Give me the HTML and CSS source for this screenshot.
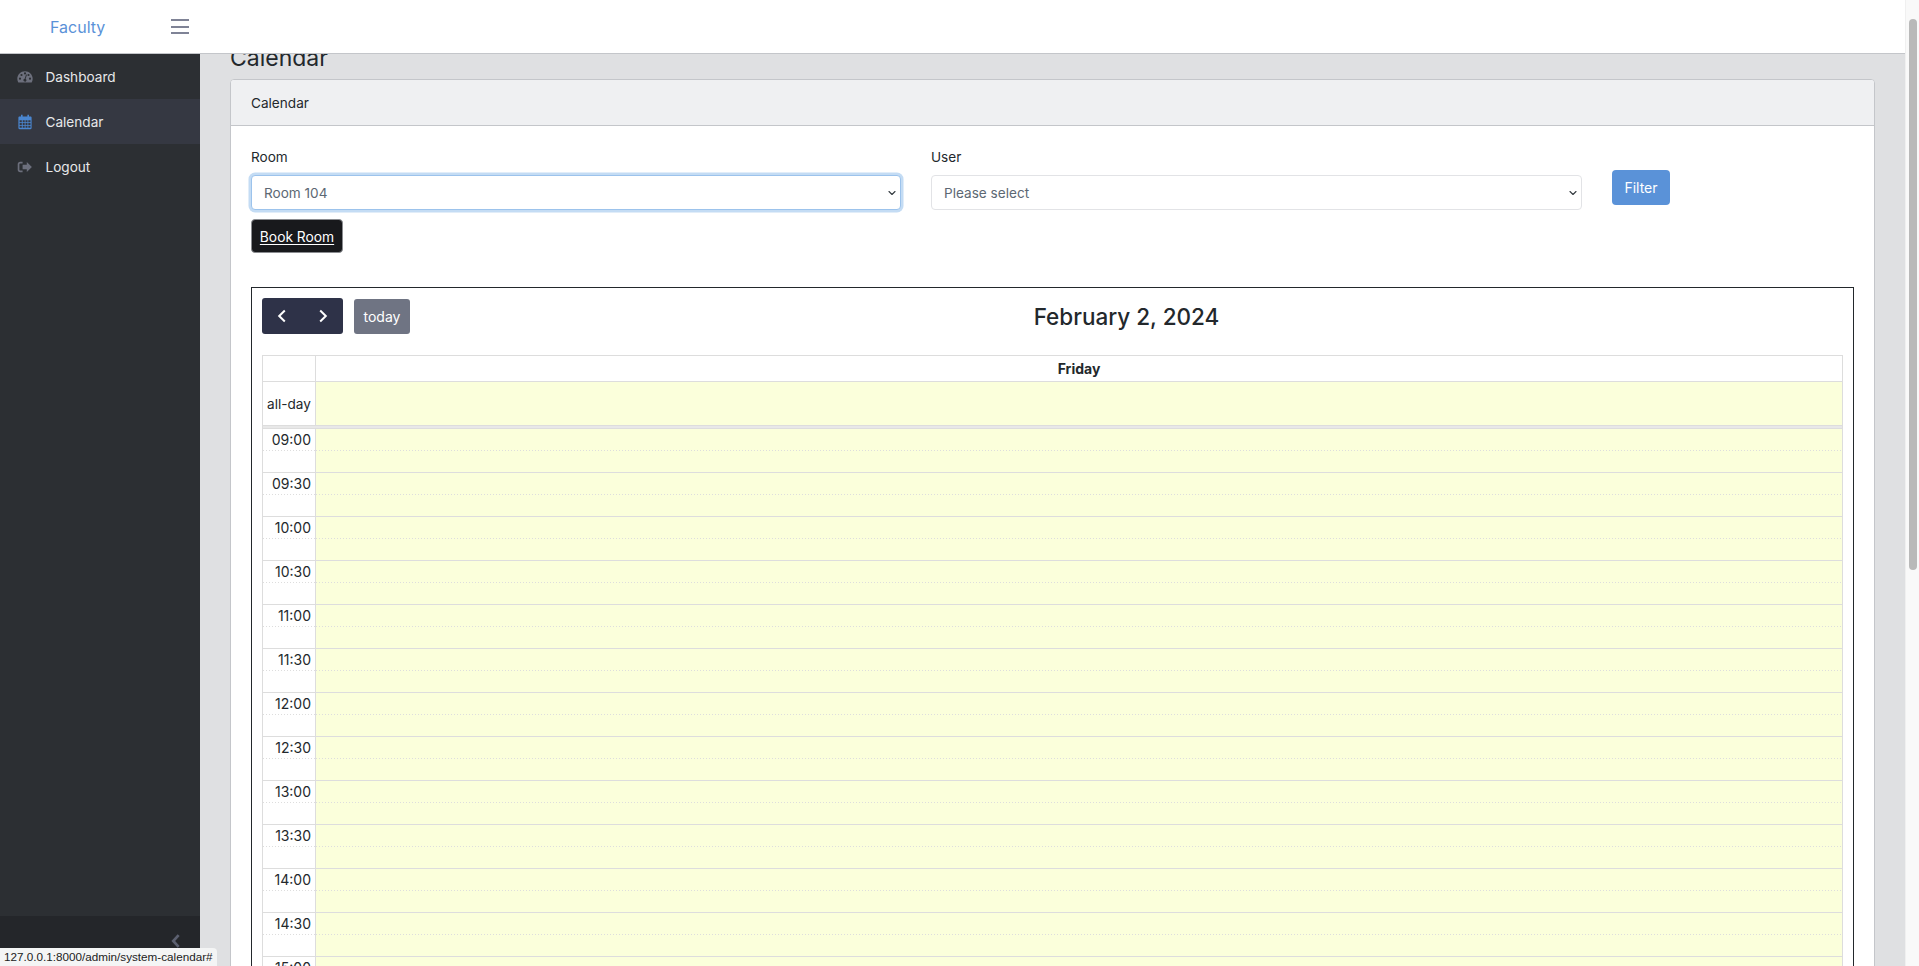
FILE: index.html
```html
<!DOCTYPE html>
<html lang="en">
<head>
<meta charset="utf-8">
<title>Calendar</title>
<link rel="stylesheet" href="styles.css">
</head>
<body>
<div class="app">
  <div class="page">
    <header class="topbar">
      <a class="brand" href="#">Faculty</a>
      <button class="burger" aria-label="Toggle menu"><span></span><span></span><span></span></button>
    </header>
    <div class="body">
      <nav class="sidebar">
        <a class="nav-item" href="#">
          <svg class="nav-icon" viewBox="0 0 16 16"><path fill="currentColor" fill-rule="evenodd" d="M8 2.200C3.700 2.200.3 5.600.3 9.800c0 1.300.3 2.400.9 3.400.1.200.3.300.5.300h12.600c.2 0 .4-.1.5-.3.6-1 .9-2.100.9-3.400 0-4.200-3.400-7.600-7.700-7.600zM3 10.800a1.100 1.100 0 1 1 0-2.200 1.100 1.100 0 0 1 0 2.200zm1.500-3.700a1.100 1.100 0 1 1 0-2.200 1.100 1.100 0 0 1 0 2.200zM8 5.500a1.100 1.100 0 1 1 0-2.200 1.100 1.100 0 0 1 0 2.200zm1.400 6.300a1.600 1.600 0 0 1-3-.9c.2-.6.7-1 1.300-1.100l1.200-3.900c.1-.3.4-.4.6-.3.3.1.4.3.3.6L8.600 9.900c.7.4 1 1.200.8 1.900zM11.500 7.100a1.100 1.100 0 1 1 0-2.200 1.100 1.100 0 0 1 0 2.200zm1.500 3.700a1.100 1.100 0 1 1 0-2.200 1.100 1.100 0 0 1 0 2.200z"/></svg>
          <span>Dashboard</span>
        </a>
        <a class="nav-item active" href="#">
          <svg class="nav-icon" viewBox="0 0 16 16"><path fill="currentColor" fill-rule="evenodd" d="M4 .8h1.600v1.600h4.800V.8H12v1.600h1.500c.6 0 1.100.5 1.100 1.100v10.600c0 .6-.5 1.100-1.100 1.100h-11c-.6 0-1.100-.5-1.100-1.100V3.500c0-.6.5-1.100 1.100-1.100H4V.8zM2.600 6.200v2h2.200v-2H2.600zm3.100 0v2h2v-2h-2zm2.800 0v2h2v-2h-2zm2.800 0v2h2.200v-2h-2.200zM2.600 9v2h2.200V9H2.600zm3.100 0v2h2V9h-2zm2.800 0v2h2V9h-2zm2.800 0v2h2.200V9h-2.200zM2.600 11.800v2h2.200v-2H2.600zm3.100 0v2h2v-2h-2zm2.800 0v2h2v-2h-2zm2.800 0v2h2.200v-2h-2.200z"/></svg>
          <span>Calendar</span>
        </a>
        <a class="nav-item" href="#">
          <svg class="nav-icon" viewBox="0 0 16 16"><path fill="currentColor" d="M5.600 2.800H3.200c-1.500 0-2.500 1-2.500 2.400v5.600c0 1.400 1 2.400 2.500 2.400h2.400v-1.700H3.400c-.6 0-1-.4-1-1V5.500c0-.6.4-1 1-1h2.200zM9.800 2.900 14.900 8l-5.100 5.100V10.200H5.600V5.800h4.200z"/></svg>
          <span>Logout</span>
        </a>
        <div class="sidebar-footer">
          <svg class="collapse-icon" viewBox="0 0 10 16"><path fill="none" stroke="currentColor" stroke-width="3" d="M8.500 1.500 2.500 8l6 6.500"/></svg>
        </div>
      </nav>
      <main class="main">
        <h3 class="page-title">Calendar</h3>
        <section class="card">
          <div class="card-header">Calendar</div>
          <div class="card-body">
            <form class="filters">
              <div class="field">
                <label class="field-label" for="room">Room</label>
                <select class="select is-focused" id="room"><option>Room 104</option></select>
              </div>
              <div class="field">
                <label class="field-label" for="user">User</label>
                <select class="select" id="user"><option>Please select</option></select>
              </div>
              <button class="btn btn-filter" type="button">Filter</button>
            </form>
            <a class="btn-book" href="#">Book Room</a>
            <div class="calendar">
              <div class="toolbar">
                <div class="toolbar-left">
                  <div class="nav-group">
                    <button class="cal-nav" aria-label="Previous"><svg viewBox="0 0 16 16"><path d="M10.800 2.500 5.200 8l5.600 5.500"/></svg></button>
                    <button class="cal-nav" aria-label="Next"><svg viewBox="0 0 16 16"><path d="M5.200 2.500 10.800 8l-5.600 5.500"/></svg></button>
                  </div>
                  <button class="btn-today">today</button>
                </div>
                <h2 class="cal-title">February 2, 2024</h2>
                <div></div>
              </div>
              <div class="grid">
                <div class="grid-row head">
                  <div class="axis"></div>
                  <div class="day-head">Friday</div>
                </div>
                <div class="grid-row allday">
                  <div class="axis axis-mid">all-day</div>
                  <div class="day"></div>
                </div>
                <div class="divider"></div>
                <div class="grid-row slot first"><div class="axis"><span class="time">09:00</span></div><div class="day"></div></div>
                <div class="grid-row slot"><div class="axis"><span class="time">09:30</span></div><div class="day"></div></div>
                <div class="grid-row slot"><div class="axis"><span class="time">10:00</span></div><div class="day"></div></div>
                <div class="grid-row slot"><div class="axis"><span class="time">10:30</span></div><div class="day"></div></div>
                <div class="grid-row slot"><div class="axis"><span class="time">11:00</span></div><div class="day"></div></div>
                <div class="grid-row slot"><div class="axis"><span class="time">11:30</span></div><div class="day"></div></div>
                <div class="grid-row slot"><div class="axis"><span class="time">12:00</span></div><div class="day"></div></div>
                <div class="grid-row slot"><div class="axis"><span class="time">12:30</span></div><div class="day"></div></div>
                <div class="grid-row slot"><div class="axis"><span class="time">13:00</span></div><div class="day"></div></div>
                <div class="grid-row slot"><div class="axis"><span class="time">13:30</span></div><div class="day"></div></div>
                <div class="grid-row slot"><div class="axis"><span class="time">14:00</span></div><div class="day"></div></div>
                <div class="grid-row slot"><div class="axis"><span class="time">14:30</span></div><div class="day"></div></div>
                <div class="grid-row slot"><div class="axis"><span class="time">15:00</span></div><div class="day"></div></div>
              </div>
            </div>
          </div>
        </section>
      </main>
    </div>
  </div>
  <div class="scrollbar"><div class="thumb"></div></div>
  <div class="status">127.0.0.1:8000/admin/system-calendar#</div>
</div>
</body>
</html>
```
FILE: styles.css
```css
* { box-sizing: border-box; }
html, body { margin: 0; height: 966px; overflow: hidden; }
body { font-family: Inter, "Liberation Sans", sans-serif; font-size: 13.6px; color: #23282c; background: #fff; }

.app { display: flex; height: 966px; position: relative; overflow: hidden; }
.page { flex: 1; min-width: 0; display: flex; flex-direction: column; }

.scrollbar { width: 14px; background: #f9f9f9; border-left: 1px solid #f0f0f0; padding: 19px 2px 0 3px; }
.thumb { height: 551px; background: #b9b9b9; border-radius: 4px; }

.topbar { height: 54px; flex: none; display: flex; align-items: center; background: #fff; border-bottom: 1px solid #c4c6ca; }
.brand { width: 155px; padding-left: 50px; font-size: 16px; color: #5a92d8; text-decoration: none; }
.burger { display: flex; flex-direction: column; justify-content: space-between; width: 18px; height: 15px; margin: 0 0 0 16px; padding: 0; border: 0; background: none; }
.burger span { display: block; height: 2px; background: #7f8396; }

.body { flex: 1; display: flex; min-height: 0; }

.sidebar { width: 200px; flex: none; display: flex; flex-direction: column; background: #2c2f33; color: #e7e8ea; }
.nav-item { display: flex; align-items: center; height: 45px; padding-left: 17px; color: #e7e8ea; text-decoration: none; }
.nav-item.active { background: #353842; }
.nav-icon { width: 16px; height: 16px; margin-right: 12.500px; color: #6c6f7c; flex: none; }
.active .nav-icon { color: #4a86d0; }
.sidebar-footer { margin-top: auto; height: 50px; background: #24262a; display: flex; justify-content: flex-end; padding: 17px 20px 0 0; color: #5c6070; }
.collapse-icon { width: 9px; height: 16px; }

.main { flex: 1; min-width: 0; background: #dfe0e2; padding: 0 30px; overflow: hidden; }
.page-title { margin: -9px 0 7px; font-size: 23px; font-weight: 400; line-height: 27px; }

.card { background: #fff; border: 1px solid #c4c6ca; border-radius: 4px 4px 0 0; }
.card-header { height: 46px; padding: 0 20px; display: flex; align-items: center; background: #eff0f2; border-bottom: 1px solid #c4c6ca; border-radius: 3px 3px 0 0; }
.card-body { padding: 20px 20px 0; }

.filters { display: flex; align-items: flex-start; gap: 30px; }
.field { width: 650px; }
.field + .field { width: 651px; }
.field-label { display: block; height: 29px; line-height: 22px; }
.select { display: block; width: 100%; height: 35px; padding: 0 12px; font: inherit; color: #5c6873; background: #fff; border: 1px solid #e2e3e6; border-radius: 4px; appearance: none; -webkit-appearance: none;
  background-image: url("data:image/svg+xml,%3csvg xmlns='http://www.w3.org/2000/svg' viewBox='0 0 16 16'%3e%3cpath fill='none' stroke='%23343a40' stroke-linecap='round' stroke-linejoin='round' stroke-width='2.200' d='M2 5l6 6 6-6'/%3e%3c/svg%3e");
  background-repeat: no-repeat; background-position: right 4px center; background-size: 8px 8px; }
.select.is-focused { border-color: #9cc3ec; box-shadow: 0 0 0 2.500px #c4dcf4; }
.btn-filter { margin: 24px 0 0; width: 58px; height: 35px; padding: 0; font: inherit; font-size: 14px; color: #fff; background: #5a92d8; border: 0; border-radius: 4px; }

.btn-book { display: block; width: 92px; height: 34px; margin-top: 9px; font-size: 13.800px; line-height: 34px; text-align: center; color: #fff; background: #18191c; border: 1px solid #8a8c90; border-radius: 4px; text-decoration: underline; text-underline-offset: 2px; }

.calendar { margin-top: 34px; padding: 10px 10px 0; border: 1px solid #23282c; border-bottom: 0; }
.toolbar { display: flex; justify-content: space-between; align-items: center; height: 36px; margin-bottom: 21px; }
.toolbar-left { display: flex; align-items: flex-end; gap: 11px; }
.nav-group { display: flex; width: 81px; height: 36px; background: #2e3248; border-radius: 3px; }
.cal-nav { flex: 1; padding: 0; background: none; border: 0; display: flex; align-items: center; justify-content: center; }
.cal-nav svg { width: 16px; height: 16px; fill: none; stroke: #fff; stroke-width: 2; }
.btn-today { width: 56px; height: 35px; padding: 0; font: inherit; font-size: 14px; color: #fff; background: #6f7483; border: 0; border-radius: 3px; }
.cal-title { margin: 2px 0 0; font-size: 22.500px; font-weight: 500; line-height: 36px; color: #23282c; white-space: nowrap; }

.grid { border: 1px solid #ddd; border-bottom: 0; }
.grid-row { display: flex; border-top: 1px solid #ddd; }
.grid-row.head { border-top: 0; height: 25px; }
.grid-row.allday { height: 44px; }
.divider { height: 4px; background: #e8e8e8; border-top: 1px solid #ddd; border-bottom: 1px solid #ddd; }
.grid-row.slot { height: 44px; }
.grid-row.first { border-top: 0; height: 43px; }
.axis { width: 53px; flex: none; border-right: 1px solid #ddd; padding: 0 4px; text-align: right; color: #23282c; }
.axis-mid { display: flex; align-items: center; justify-content: center; padding: 0; }
.time { display: block; font-size: 14px; line-height: 21px; }
.day-head { flex: 1; text-align: center; font-size: 14px; font-weight: 700; line-height: 25px; }
.day { flex: 1; background: #fbffdb; }
.slot .axis, .slot .day { background-image: linear-gradient(to right, #ddd 50%, transparent 50%); background-size: 3px 1px; background-repeat: repeat-x; background-position: 0 21px; }
.slot .axis { background-color: #fff; }

.status { position: absolute; left: 0; bottom: 0; width: 217px; height: 18px; padding-left: 4px; font-size: 11.700px; line-height: 18px; font-family: "Liberation Sans", sans-serif; color: #222; background: #f4f5f5; border-radius: 0 4px 0 0; white-space: nowrap; }
```
